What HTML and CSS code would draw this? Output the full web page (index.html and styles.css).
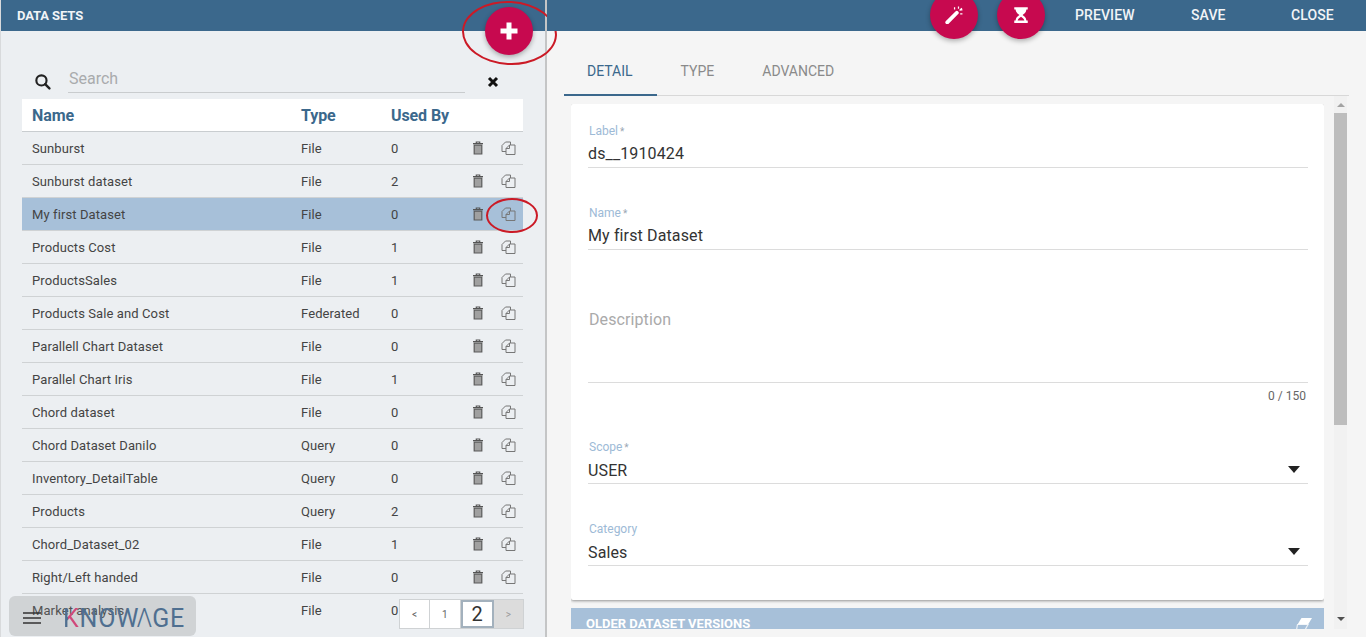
FILE: index.html
```html
<!DOCTYPE html>
<html lang="en">
<head>
<meta charset="utf-8">
<title>Data sets</title>
<link rel="stylesheet" href="styles.css">
</head>
<body>
<div class="app">
  <aside class="left">
    <header class="bar bar-left"><span class="bar-title">DATA SETS</span></header>
    <div class="search">
      <svg class="search-icon" viewBox="0 0 16 16"><circle cx="7" cy="7" r="4.8" fill="none" stroke="#222" stroke-width="2"/><path d="M10.5 10.5L14.5 14.5" stroke="#222" stroke-width="2.2" stroke-linecap="round"/></svg>
      <div class="search-field">Search</div>
      <svg class="clear-icon" viewBox="0 0 12 12"><path d="M2 2L10 10M10 2L2 10" stroke="#111" stroke-width="3"/></svg>
    </div>
    <div class="table">
      <div class="row head"><span class="c-name">Name</span><span class="c-type">Type</span><span class="c-used">Used By</span></div>
      <div class="row"><span class="c-name">Sunburst</span><span class="c-type">File</span><span class="c-used">0</span><svg class="ico-del"><use href="#trash"/></svg><svg class="ico-copy"><use href="#copy"/></svg></div>
      <div class="row"><span class="c-name">Sunburst dataset</span><span class="c-type">File</span><span class="c-used">2</span><svg class="ico-del"><use href="#trash"/></svg><svg class="ico-copy"><use href="#copy"/></svg></div>
      <div class="row selected"><span class="c-name">My first Dataset</span><span class="c-type">File</span><span class="c-used">0</span><svg class="ico-del"><use href="#trash"/></svg><svg class="ico-copy"><use href="#copy"/></svg></div>
      <div class="row"><span class="c-name">Products Cost</span><span class="c-type">File</span><span class="c-used">1</span><svg class="ico-del"><use href="#trash"/></svg><svg class="ico-copy"><use href="#copy"/></svg></div>
      <div class="row"><span class="c-name">ProductsSales</span><span class="c-type">File</span><span class="c-used">1</span><svg class="ico-del"><use href="#trash"/></svg><svg class="ico-copy"><use href="#copy"/></svg></div>
      <div class="row"><span class="c-name">Products Sale and Cost</span><span class="c-type">Federated</span><span class="c-used">0</span><svg class="ico-del"><use href="#trash"/></svg><svg class="ico-copy"><use href="#copy"/></svg></div>
      <div class="row"><span class="c-name">Parallell Chart Dataset</span><span class="c-type">File</span><span class="c-used">0</span><svg class="ico-del"><use href="#trash"/></svg><svg class="ico-copy"><use href="#copy"/></svg></div>
      <div class="row"><span class="c-name">Parallel Chart Iris</span><span class="c-type">File</span><span class="c-used">1</span><svg class="ico-del"><use href="#trash"/></svg><svg class="ico-copy"><use href="#copy"/></svg></div>
      <div class="row"><span class="c-name">Chord dataset</span><span class="c-type">File</span><span class="c-used">0</span><svg class="ico-del"><use href="#trash"/></svg><svg class="ico-copy"><use href="#copy"/></svg></div>
      <div class="row"><span class="c-name">Chord Dataset Danilo</span><span class="c-type">Query</span><span class="c-used">0</span><svg class="ico-del"><use href="#trash"/></svg><svg class="ico-copy"><use href="#copy"/></svg></div>
      <div class="row"><span class="c-name">Inventory_DetailTable</span><span class="c-type">Query</span><span class="c-used">0</span><svg class="ico-del"><use href="#trash"/></svg><svg class="ico-copy"><use href="#copy"/></svg></div>
      <div class="row"><span class="c-name">Products</span><span class="c-type">Query</span><span class="c-used">2</span><svg class="ico-del"><use href="#trash"/></svg><svg class="ico-copy"><use href="#copy"/></svg></div>
      <div class="row"><span class="c-name">Chord_Dataset_02</span><span class="c-type">File</span><span class="c-used">1</span><svg class="ico-del"><use href="#trash"/></svg><svg class="ico-copy"><use href="#copy"/></svg></div>
      <div class="row"><span class="c-name">Right/Left handed</span><span class="c-type">File</span><span class="c-used">0</span><svg class="ico-del"><use href="#trash"/></svg><svg class="ico-copy"><use href="#copy"/></svg></div>
      <div class="row last"><span class="c-name">Market analysis</span><span class="c-type">File</span><span class="c-used">0</span></div>
    </div>
    <div class="pager">
      <span class="page small">&lt;</span><span class="page small">1</span><span class="page current">2</span><span class="page small off">&gt;</span>
    </div>
    <button class="fab fab-add" type="button"><svg viewBox="0 0 18 18"><path d="M9 0.5V17.5M0.5 9H17.5" stroke="#fff" stroke-width="5"/></svg></button>
    <div class="mark mark-add"></div>
    <div class="mark mark-copy"></div>
  </aside>

  <main class="right">
    <header class="bar bar-right">
      <button class="fab fab-top" type="button"><svg class="ico-wand" viewBox="0 0 16 16"><path d="M2 14.5L10.5 6" stroke="#fff" stroke-width="3.4" stroke-linecap="round"/><path d="M8.5 1V3M12 0.5V2.5M15.5 3.5H13.5M15.5 7H13.5M13 4L15 2" stroke="#fff" stroke-width="1.1" fill="none"/></svg></button>
      <button class="fab fab-top" type="button"><svg viewBox="0 0 16 16"><path d="M2 1H14V3.2H12.8C12.6 5.8 10.8 7 9.4 8C10.8 9 12.6 10.2 12.8 12.8H14V15H2V12.8H3.2C3.4 10.2 5.2 9 6.6 8C5.2 7 3.4 5.8 3.2 3.2H2Z" fill="#fff"/><path d="M5 12.9C5.4 11 7 10.2 8 9.5C9 10.2 10.6 11 11 12.9Z" fill="#c7094f"/></svg></button>
      <span class="action act-preview">PREVIEW</span>
      <span class="action act-save">SAVE</span>
      <span class="action act-close">CLOSE</span>
    </header>
    <nav class="tabs">
      <span class="tab active">DETAIL</span>
      <span class="tab">TYPE</span>
      <span class="tab">ADVANCED</span>
    </nav>
    <div class="scroller">
      <div class="content">
        <section class="card">
          <div class="field f-label"><label>Label<span class="req">*</span></label><div class="value">ds__1910424</div></div>
          <div class="field f-name"><label>Name<span class="req">*</span></label><div class="value">My first Dataset</div></div>
          <div class="field f-desc"><div class="placeholder">Description</div></div>
          <div class="counter">0 / 150</div>
          <div class="field f-scope"><label>Scope<span class="req">*</span></label><div class="value">USER<i class="caret"></i></div></div>
          <div class="field f-cat"><label>Category</label><div class="value">Sales<i class="caret"></i></div></div>
        </section>
        <section class="older">
          <span>OLDER DATASET VERSIONS</span>
          <svg class="eraser" viewBox="0 0 16 14"><path d="M5.5 0H16L12 6.5H1.5Z" fill="#fff"/><path d="M1.5 6.5H12L9 12H0.5Z" fill="none" stroke="#fff" stroke-width="1.2" opacity=".75"/></svg>
        </section>
      </div>
      <div class="scrollbar"><i class="arrow up"></i><div class="thumb"></div><i class="arrow down"></i></div>
    </div>
  </main>
</div>

<div class="menu">
  <svg class="burger" viewBox="0 0 18 12"><path d="M0 1H18M0 6H18M0 11H18" stroke="#333" stroke-width="1.4"/></svg>
  <span class="logo"><span class="logo-k">K</span>NOW<span class="logo-a">&#923;</span>GE</span>
</div>

<svg class="defs" width="0" height="0" aria-hidden="true">
  <symbol id="trash" viewBox="0 0 12 14"><path d="M1 2.7H11M4.3 2.4V1H7.7V2.4" fill="none" stroke="#555" stroke-width="1.2"/><path d="M2.2 4.2H9.8V13H2.2Z" fill="#a0a0a0" stroke="#5a5a5a" stroke-width="1.2"/></symbol>
  <symbol id="copy" viewBox="0 0 15 14"><path d="M5 10.5H1V4.5L4.5 1H9.5V4" fill="none" stroke="#777" stroke-width="1"/><path d="M5 13.5V7.5L8.5 4H14V13.5Z M5 7.5H8.5V4" fill="none" stroke="#777" stroke-width="1"/></symbol>
</svg>
</body>
</html>
```
FILE: styles.css
```css
* { box-sizing: border-box; }
html, body { margin: 0; height: 100%; overflow: hidden; }
body { font-family: Roboto, "Liberation Sans", sans-serif; color: #333; background: #f5f5f5; }
.defs { position: absolute; }
.app { display: flex; height: 637px; }

.bar { height: 31px; background: #3b688c; color: #fff; display: flex; align-items: center; flex: none; }

/* left panel */
.left { position: relative; width: 547px; flex: none; background: #eceff2; border-left: 1px solid #d8dadc; border-right: 2px solid #c4c5c6; display: flex; flex-direction: column; }
.bar-left { padding-left: 16px; }
.bar-title { font-size: 13px; font-weight: 700; letter-spacing: -.1px; color: #f1f4f7; }
.search { height: 68px; flex: none; display: flex; align-items: flex-end; padding: 0 0 5px 33px; position: relative; }
.search-icon { width: 17px; height: 17px; margin-bottom: 4px; flex: none; }
.search-field { width: 397px; margin-left: 17px; height: 26px; margin-bottom: 1px; border-bottom: 1px solid #c9ccce; color: #a9abad; font-size: 16px; padding: 0 1px; line-height: 24px; }
.clear-icon { width: 12px; height: 12px; margin-left: 22px; margin-bottom: 6px; flex: none; }
.table { margin-left: 21px; width: 501px; flex: none; }
.row { position: relative; display: flex; align-items: center; height: 33px; border-bottom: 1px solid #cfd2d4; font-size: 13px; color: #444; letter-spacing: .1px; }
.row.head { background: #fff; height: 33px; font-size: 16px; font-weight: 700; color: #3b688c; letter-spacing: -.1px; border-bottom-color: #c9cdd0; }
.row.selected { background: #a7c0d9; }
.row.last { border-bottom: 0; }
.c-name { width: 279px; padding-left: 10px; flex: none; }
.c-type { width: 90px; flex: none; }
.c-used { width: 72px; flex: none; }
.ico-del { width: 12px; height: 14px; flex: none; margin-left: 9px; }
.ico-copy { width: 15px; height: 14px; flex: none; margin-left: 17px; }

.pager { position: absolute; left: 398px; top: 599px; width: 125px; display: flex; height: 30px; border: 1px solid #cfd2d4; background: #fff; }
.page { flex: 1; display: flex; align-items: center; justify-content: center; border-right: 1px solid #cfd2d4; font-size: 20px; color: #333; }
.page.small { font-size: 10px; color: #666; }
.page.current { border: 2px solid #a3b1bd; }
.page.off { background: #dcdcdc; border-right: 0; color: #999; }

.fab { border: 0; padding: 0; width: 48px; height: 48px; border-radius: 50%; background: #c7094f; box-shadow: 0 2px 5px rgba(0,0,0,.3); display: flex; align-items: center; justify-content: center; }
.fab-add { position: absolute; left: 484px; top: 7px; }
.fab-add svg { width: 18px; height: 18px; }
.mark { position: absolute; border: 2.5px solid #cb1a26; border-radius: 50%; pointer-events: none; }
.mark-add { left: 461px; top: 1px; width: 95px; height: 64px; transform: rotate(3deg); }
.mark-copy { left: 485px; top: 198px; width: 52px; height: 35px; }

/* right panel */
.right { flex: 1; min-width: 0; display: flex; flex-direction: column; background: #f5f5f5; }
.bar-right { position: relative; padding-right: 0; }
.fab-top { position: absolute; top: -9px; }
.fab-top:nth-child(1) { left: 383px; }
.fab-top:nth-child(2) { left: 450px; }
.fab-top svg { width: 18px; height: 18px; }
.action { position: absolute; top: 7px; font-size: 14px; font-weight: 500; color: #f1f4f7; line-height: 16px; letter-spacing: .1px; }
.act-preview { left: 528px; }
.act-save { left: 644px; }
.act-close { left: 744px; }
.tabs { height: 65px; margin: 0 17px; flex: none; display: flex; align-items: flex-end; border-bottom: 1px solid #d8d8d8; }
.tab { height: 43px; padding: 9px 24px 0 23px; font-size: 14px; color: #8a8a8a; line-height: 20px; }
.tab + .tab { padding: 9px 24px 0; }
.tab.active { color: #3b688c; border-bottom: 2px solid #3b688c; margin-bottom: -1px; height: 44px; }
.scroller { height: 533px; display: flex; overflow: hidden; flex: none; }
.content { margin-left: 24px; margin-top: 8px; width: 753px; flex: none; height: 525px; overflow: hidden; }
.card { position: relative; height: 496px; background: #fff; border-radius: 2px; box-shadow: 0 1px 3px rgba(0,0,0,.4); padding: 0 16px 0 17px; margin-bottom: 8px; }
.field { border-bottom: 1px solid #dcdcdc; position: relative; }
.field label { display: block; font-size: 12px; color: #9dbad6; line-height: 14px; padding-left: 1px; }
.req { font-size: 10px; margin-left: 2px; color: #9aa7b3; }
.value { font-size: 16px; line-height: 20px; color: #333; margin-top: 5px; padding-bottom: 3px; position: relative; letter-spacing: .13px; }
.f-label { padding-top: 20px; }
.f-name { margin-top: 38px; }
.f-desc { height: 133px; padding-top: 60px; }
.placeholder { font-size: 16px; color: #aaa; line-height: 20px; padding-left: 1px; letter-spacing: .1px; }
.counter { text-align: right; font-size: 12px; color: #666; padding: 6px 2px 0 0; line-height: 14px; height: 57px; }
.f-scope .value { margin-top: 6px; padding-bottom: 2px; }
.f-cat .value { margin-top: 7px; padding-bottom: 2px; }
.f-cat { margin-top: 38px; }
.caret { position: absolute; right: 8px; top: 5px; width: 0; height: 0; border-left: 6px solid transparent; border-right: 6px solid transparent; border-top: 7px solid #222; }
.older { height: 30px; background: #a7c0d9; position: relative; color: #fff; font-size: 13px; font-weight: 700; padding: 8px 0 0 15px; line-height: 16px; }
.eraser { position: absolute; right: 12px; top: 10px; width: 16px; height: 14px; }
.scrollbar { margin-left: 10px; width: 13px; height: 533px; background: #f1f1f1; position: relative; }
.thumb { position: absolute; top: 17px; left: 0; width: 13px; height: 312px; background: #bdbdbd; }
.arrow { position: absolute; left: 3px; width: 0; height: 0; border-left: 4px solid transparent; border-right: 4px solid transparent; }
.arrow.up { top: 7px; border-bottom: 4px solid #a3a3a3; }
.arrow.down { bottom: 8px; border-top: 4px solid #505050; }

/* floating menu */
.menu { position: absolute; left: 9px; top: 596px; width: 187px; height: 40px; background: rgba(125,128,128,.25); border-radius: 6px; display: flex; align-items: center; padding-left: 14px; }
.burger { width: 18px; height: 12px; flex: none; margin-top: 3px; }
.logo { margin-left: 22px; font-size: 25px; font-weight: 400; letter-spacing: .8px; color: #4f6f90; line-height: 24px; margin-top: 5px; white-space: nowrap; }
.logo-k { background: linear-gradient(90deg, #4f6f90 0 28%, #d0487a 28% 100%); -webkit-background-clip: text; background-clip: text; color: transparent; }
.logo-a { margin: 0 -1px 0 -3px; font-weight: 300; }
```
